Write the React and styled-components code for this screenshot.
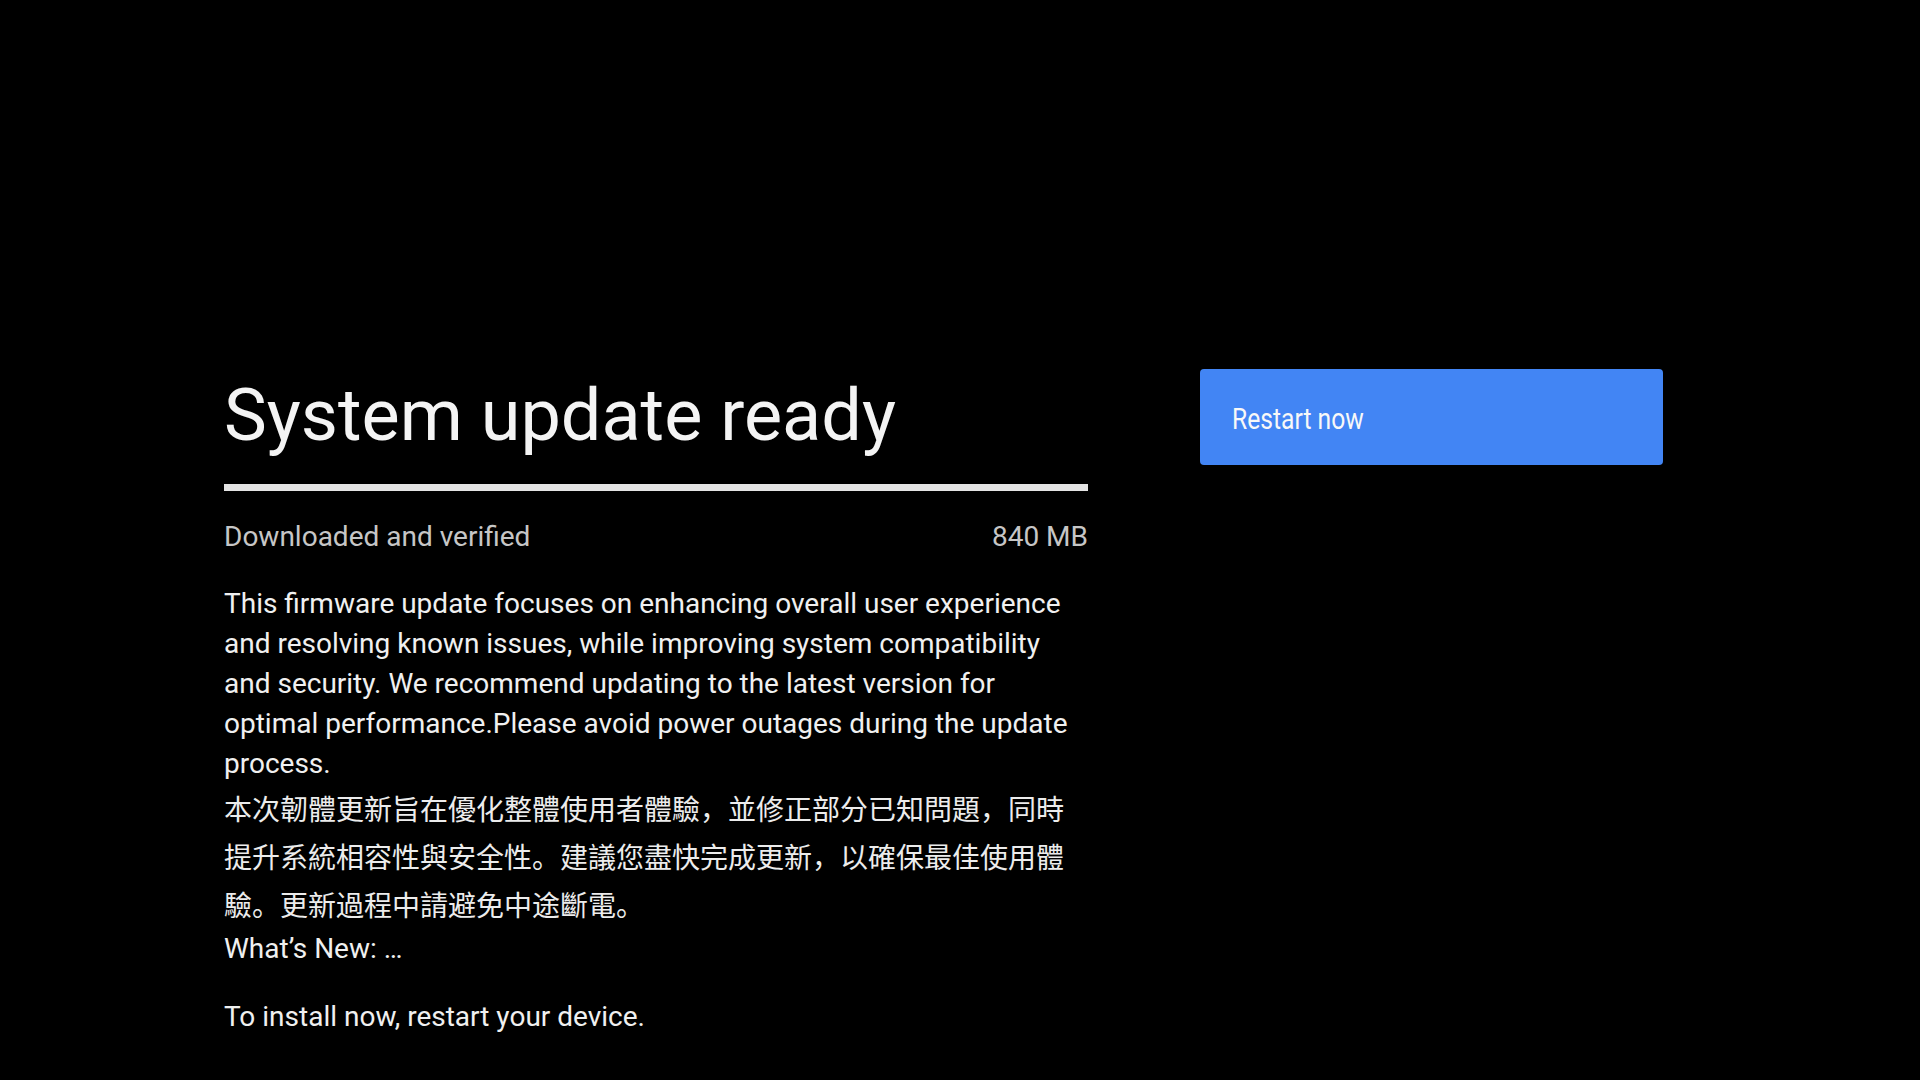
import styled, { createGlobalStyle } from "styled-components";

const GlobalStyle = createGlobalStyle`
  html, body {
    margin: 0;
    padding: 0;
    background: #000;
  }
  body {
    font-family: Roboto, "Noto Sans CJK SC", sans-serif;
  }
`;

const Screen = styled.div`
  width: 1920px;
  height: 1080px;
  box-sizing: border-box;
  background: #000;
  display: flex;
  align-items: flex-start;
  gap: 112px;
  padding: 369px 0 0 224px;
  overflow: hidden;
`;

const InfoColumn = styled.div`
  width: 864px;
  display: flex;
  flex-direction: column;
`;

const Title = styled.h1`
  margin: 11px 0 0;
  font-size: 72px;
  line-height: 72px;
  font-weight: 400;
  color: #f4f4f4;
  white-space: nowrap;
`;

const ProgressBar = styled.div`
  height: 7px;
  margin-top: 32px;
  background: #e4e4e4;
`;

const MetaRow = styled.div`
  display: flex;
  justify-content: space-between;
  margin-top: 26px;
  font-size: 28px;
  line-height: 40px;
  color: #c6c6c6;
`;

const Notes = styled.div`
  margin-top: 27px;
  max-width: 850px;
  font-size: 28px;
  color: #f0f0f0;
`;

const Para = styled.p`
  margin: 0;
  line-height: 40px;
`;

const CjkPara = styled.p`
  margin: 0 0 1px;
  line-height: 48px;
  font-family: "Noto Sans CJK SC", Roboto, sans-serif;
  color: #ececec;
`;

const InstallHint = styled.p`
  margin: 28px 0 0;
  font-size: 28px;
  line-height: 40px;
  color: #f0f0f0;
`;

const RestartButton = styled.button`
  width: 463px;
  height: 96px;
  box-sizing: border-box;
  border: none;
  border-radius: 4px;
  background: #4285f4;
  color: #f8f8f8;
  display: flex;
  align-items: center;
  padding: 4px 0 0 32px;
  font-family: Roboto, sans-serif;
  font-size: 29px;
  cursor: pointer;
`;

const ButtonLabel = styled.span`
  display: inline-block;
  transform: scaleX(0.85);
  transform-origin: left center;
`;

const App = () => {
  return (
    <>
      <GlobalStyle />
      <Screen>
        <InfoColumn>
          <Title>System update ready</Title>
          <ProgressBar />
          <MetaRow>
            <span>Downloaded and verified</span>
            <span>840 MB</span>
          </MetaRow>
          <Notes>
            <Para>
              This firmware update focuses on enhancing overall user experience
              and resolving known issues, while improving system compatibility
              and security. We recommend updating to the latest version for
              optimal performance.Please avoid power outages during the update
              process.
            </Para>
            <CjkPara>
              本次韌體更新旨在優化整體使用者體驗，並修正部分已知問題，同時提升系統相容性與安全性。建議您盡快完成更新，以確保最佳使用體驗。更新過程中請避免中途斷電。
            </CjkPara>
            <Para>What’s New: …</Para>
          </Notes>
          <InstallHint>To install now, restart your device.</InstallHint>
        </InfoColumn>
        <RestartButton>
          <ButtonLabel>Restart now</ButtonLabel>
        </RestartButton>
      </Screen>
    </>
  );
};

export default App;
